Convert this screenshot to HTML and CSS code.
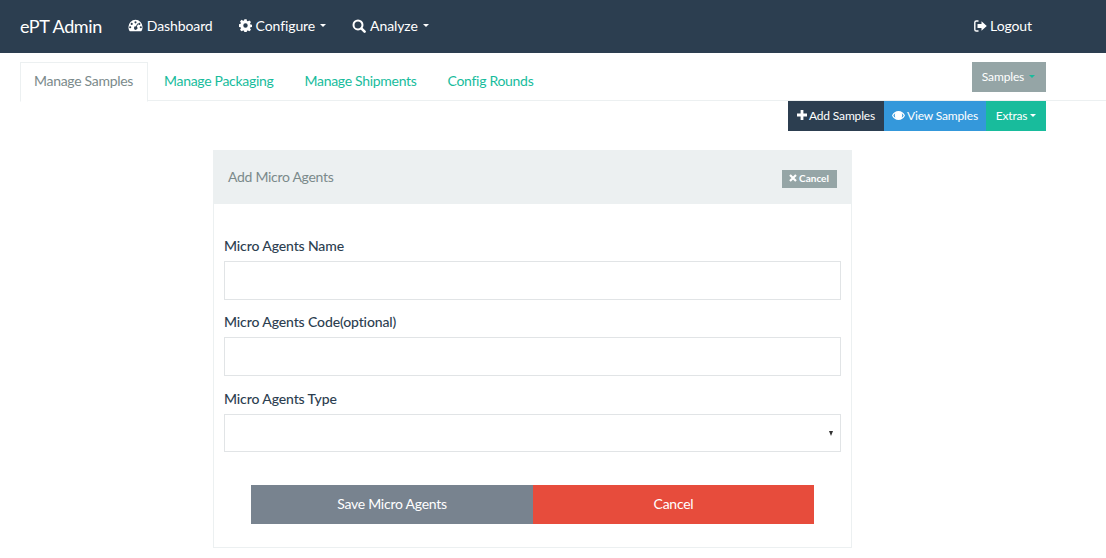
FILE: index.html
```html
<!DOCTYPE html>
<html lang="en">

<head>
    <meta charset="UTF-8">
    <title>ePT Admin</title>
    <link rel="stylesheet" href="styles.css">
</head>

<body>
    <nav class="navbar">
        <a class="brand" href="#">ePT Admin</a>
        <a class="nav-link" href="#">
            <svg class="icon" width="15" height="13" viewBox="0 0 17 14"><path fill="currentColor" fill-rule="evenodd" d="M8.500 .6a8 8 0 0 1 8 8c0 1.800-.4 3.300-1.200 4.600l-.5.3H2.200l-.5-.3A8 8 0 0 1 .5 8.600a8 8 0 0 1 8-8zM8.500 2.200a1.200 1.200 0 1 0 0 2.400 1.200 1.200 0 0 0 0-2.400zM4.200 4a1.200 1.200 0 1 0 0 2.400 1.200 1.200 0 0 0 0-2.400zM12.800 4a1.200 1.200 0 1 0 0 2.400 1.200 1.200 0 0 0 0-2.400zM2.500 7.800a1.200 1.200 0 1 0 0 2.400 1.200 1.200 0 0 0 0-2.400zM14.500 7.800a1.200 1.200 0 1 0 0 2.400 1.200 1.200 0 0 0 0-2.400zM10.600 4.800 8.900 8a1.900 1.900 0 1 0 1.100.5l1.400-3.300z"/></svg>
            Dashboard
        </a>
        <a class="nav-link" href="#">
            <svg class="icon" width="13" height="13" viewBox="0 0 14 14"><path fill="currentColor" fill-rule="evenodd" d="M5.800.3h2.400l.4 1.800 1 .4 1.600-1 1.700 1.700-1 1.600.4 1 1.700.4v2.400l-1.700.4-.4 1 1 1.600-1.700 1.700-1.600-1-1 .4-.4 1.700H5.800l-.4-1.700-1-.4-1.600 1-1.700-1.700 1-1.600-.4-1-1.700-.4V5.600l1.700-.4.4-1-1-1.600 1.700-1.700 1.600 1 1-.4zM7 4.600a2.400 2.400 0 1 0 0 4.800 2.400 2.400 0 0 0 0-4.800z"/></svg>
            Configure <span class="caret"></span>
        </a>
        <a class="nav-link" href="#">
            <svg class="icon" width="14" height="14" viewBox="0 0 14 14"><path fill="none" stroke="currentColor" stroke-width="2" d="M6 1.400a4.500 4.500 0 1 1 0 9 4.500 4.500 0 0 1 0-9z"/><path fill="none" stroke="currentColor" stroke-width="2.600" stroke-linecap="round" d="m9.600 9.600 3 3"/></svg>
            Analyze <span class="caret"></span>
        </a>
        <a class="nav-link logout" href="#">
            <svg class="icon" width="13" height="12" viewBox="0 0 13 12"><path fill="none" stroke="currentColor" stroke-width="1.400" d="M4.500 1H2.400C1.500 1 .8 1.700 .8 2.600v6.800c0 .9.700 1.600 1.600 1.600h2.100"/><path fill="currentColor" d="M7.500 1.200 12.800 6l-5.300 4.800V8H3.500V4h4z"/></svg>
            Logout
        </a>
    </nav>

    <div class="page">
        <div class="tabs-row">
            <ul class="tabs">
                <li class="tab active"><a href="#">Manage Samples</a></li>
                <li class="tab"><a href="#">Manage Packaging</a></li>
                <li class="tab"><a href="#">Manage Shipments</a></li>
                <li class="tab"><a href="#">Config Rounds</a></li>
            </ul>
            <a class="btn btn-samples" href="#">Samples <span class="caret caret-teal"></span></a>
        </div>

        <div class="actions">
            <a class="btn btn-dark" href="#">
                <svg class="icon" width="10" height="10" viewBox="0 0 10 10"><path fill="currentColor" d="M3.600 0h2.800v3.600H10v2.800H6.400V10H3.600V6.400H0V3.600h3.600z"/></svg>
                Add Samples
            </a>
            <a class="btn btn-blue" href="#">
                <svg class="icon" width="13" height="9" viewBox="0 0 13 9"><path fill="currentColor" fill-rule="evenodd" d="M6.500 0C9.300 0 11.700 1.700 13 4.500 11.700 7.300 9.300 9 6.500 9S1.300 7.300 0 4.500C1.300 1.700 3.700 0 6.500 0zM1.300 4.500c.5.900 1.200 1.700 2 2.200a4 4 0 0 1 0-4.400c-.8.500-1.500 1.300-2 2.200zM11.700 4.500c-.5-.9-1.200-1.700-2-2.200a4 4 0 0 1 0 4.400c.8-.5 1.500-1.300 2-2.200z"/></svg>
                View Samples
            </a>
            <a class="btn btn-green" href="#">Extras <span class="caret"></span></a>
        </div>

        <section class="panel">
            <header class="panel-heading">
                <h3 class="panel-title">Add Micro Agents</h3>
                <a class="btn-cancel-small" href="#">
                    <svg class="icon" width="8" height="8" viewBox="0 0 8 8"><path fill="none" stroke="currentColor" stroke-width="2.200" d="m1 1 6 6M7 1 1 7"/></svg>
                    Cancel
                </a>
            </header>
            <form class="panel-body">
                <div class="field">
                    <label for="name">Micro Agents Name</label>
                    <input type="text" id="name">
                </div>
                <div class="field">
                    <label for="code">Micro Agents Code(optional)</label>
                    <input type="text" id="code">
                </div>
                <div class="field">
                    <label for="type">Micro Agents Type</label>
                    <div class="select-box" id="type"><span class="select-arrow"></span></div>
                </div>
                <div class="form-buttons">
                    <button type="button" class="btn-save">Save Micro Agents</button>
                    <button type="button" class="btn-red">Cancel</button>
                </div>
            </form>
        </section>
    </div>
</body>

</html>
```

FILE: styles.css
```css
* {
    box-sizing: border-box;
}

html,
body {
    height: 558px;
    overflow: hidden;
}

body {
    margin: 0;
    font-family: Lato, "Open Sans", sans-serif;
    font-size: 14px;
    color: #2c3e50;
    background-color: #fff;
}

a {
    text-decoration: none;
}

.icon {
    flex: none;
}

.caret {
    display: inline-block;
    width: 0;
    height: 0;
    margin-left: 1px;
    vertical-align: middle;
    border-top: 3px solid;
    border-left: 3px solid transparent;
    border-right: 3px solid transparent;
}

.caret-teal {
    color: #18bc9c;
    margin-left: 5px;
}

/* top bar */
.navbar {
    display: flex;
    align-items: center;
    height: 53px;
    padding: 0 74px 2px 20px;
    background-color: #2c3e50;
}

.brand {
    color: #fff;
    font-size: 18px;
    letter-spacing: -.4px;
    margin-right: 26px;
}

.nav-link {
    display: flex;
    align-items: center;
    gap: 4px;
    color: #fff;
    font-size: 14px;
    letter-spacing: -.1px;
    margin-right: 26px;
}

.logout {
    margin-left: auto;
    margin-right: 0;
    gap: 3px;
}

/* tabs */
.page {
    padding: 9px 60px 0 20px;
}

.tabs-row {
    position: relative;
    height: 39px;
    margin-right: -60px;
    border-bottom: 1px solid #ecf0f1;
}

.tabs {
    display: flex;
    margin: 0;
    padding: 0;
    list-style: none;
}

.tab a {
    display: block;
    height: 39px;
    padding: 0 14px;
    margin-right: 3px;
    line-height: 38px;
    font-size: 14px;
    letter-spacing: -.3px;
    color: #18bc9c;
}

.tab.active a {
    height: 40px;
    width: 128px;
    margin-right: 2px;
    line-height: 36px;
    color: #7b8a8b;
    background-color: #fff;
    border: 1px solid #ecf0f1;
    border-bottom-color: #fff;
    padding: 0 13px;
}

.btn {
    display: inline-flex;
    align-items: center;
    justify-content: center;
    height: 30px;
    padding-bottom: 2px;
    color: #fff;
    font-size: 12px;
    letter-spacing: -.15px;
}

.btn-samples {
    position: absolute;
    top: 0;
    right: 60px;
    width: 74px;
    padding-right: 1px;
    background-color: #95a5a6;
}

.actions {
    display: flex;
    justify-content: flex-end;
}

.actions .btn {
    gap: 2px;
}

.btn-dark {
    width: 96px;
    background-color: #2c3e50;
}

.btn-blue {
    width: 102px;
    background-color: #3498db;
}

.btn-green {
    width: 60px;
    background-color: #18bc9c;
}

/* panel */
.panel {
    width: 639px;
    height: 398px;
    margin: 19px 0 0 193px;
    border: 1px solid #ecf0f1;
}

.panel-heading {
    display: flex;
    align-items: center;
    justify-content: space-between;
    height: 53px;
    padding: 0 14px 3px 14px;
    background-color: #ecf0f1;
}

.panel-title {
    margin: 0;
    font-size: 14px;
    font-weight: 400;
    letter-spacing: -.3px;
    color: #7b8a8b;
}

.btn-cancel-small {
    display: flex;
    align-items: center;
    gap: 2px;
    width: 55px;
    height: 18px;
    margin-top: 6px;
    padding: 0 1px 2px 0;
    justify-content: center;
    font-size: 10px;
    font-weight: 700;
    color: #fff;
    background-color: #95a5a6;
}

.panel-body {
    padding: 33px 10px 0;
}

.field {
    margin-bottom: 13.400px;
}

.field label {
    display: block;
    height: 24px;
    line-height: 17px;
    font-size: 14px;
    font-weight: 500;
    letter-spacing: -.12px;
    color: #2c3e50;
}

.field input,
.select-box {
    display: block;
    width: 100%;
    height: 39px;
    padding: 0 12px;
    background-color: #fff;
    border: 1px solid #e1e4e6;
}

.select-box {
    position: relative;
    height: 38px;
}

.select-arrow {
    position: absolute;
    top: 16px;
    right: 7px;
    border-top: 5px solid #333;
    border-left: 2.500px solid transparent;
    border-right: 2.500px solid transparent;
}

.form-buttons {
    display: flex;
    margin: 33px 27px 0;
}

.form-buttons button {
    height: 39px;
    border: 0;
    padding: 0 0 2px;
    color: #fff;
    font-family: inherit;
    font-size: 14px;
    letter-spacing: -.25px;
}

.btn-save {
    width: 282px;
    background-color: #78838f;
}

.btn-red {
    width: 281px;
    background-color: #e74c3c;
}
```
